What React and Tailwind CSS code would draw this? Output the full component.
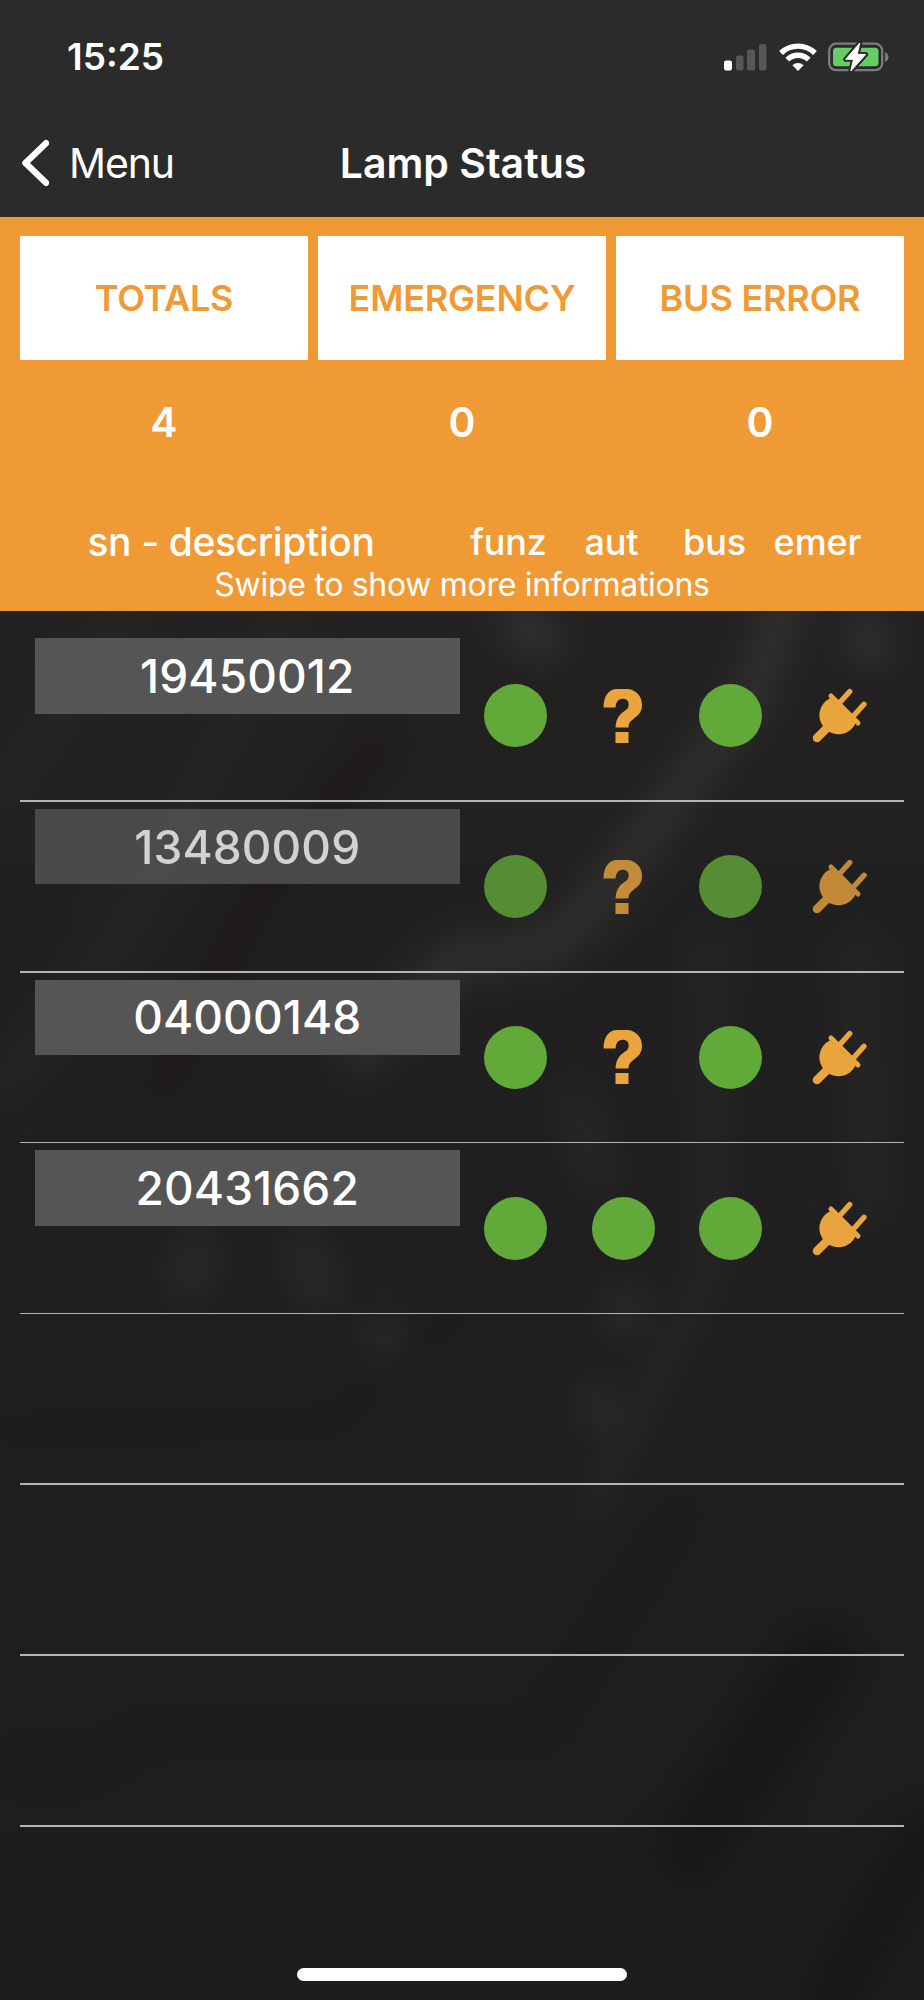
import React from 'react';

const summary = [
  { label: 'TOTALS', value: 4 },
  { label: 'EMERGENCY', value: 0 },
  { label: 'BUS ERROR', value: 0 },
];

const lamps = [
  { sn: '19450012', status: ['ok', 'unknown', 'ok', 'plug'] },
  { sn: '13480009', status: ['ok', 'unknown', 'ok', 'plug'], dimmed: true },
  { sn: '04000148', status: ['ok', 'unknown', 'ok', 'plug'] },
  { sn: '20431662', status: ['ok', 'ok', 'ok', 'plug'] },
  null,
  null,
  null,
];

const SignalIcon = () => (
  <svg width="43" height="28" viewBox="0 0 43 28">
    <rect x="0" y="17.5" width="8" height="10" rx="2" fill="#fff" />
    <rect x="12" y="12.5" width="7.5" height="15" rx="2" fill="#575757" />
    <rect x="23" y="6.5" width="8" height="21" rx="2" fill="#575757" />
    <rect x="35" y="1" width="7.5" height="26.5" rx="2" fill="#575757" />
  </svg>
);

const WifiIcon = () => (
  <svg width="38" height="28" viewBox="0 0 38 28">
    <g fill="none" stroke="#fff" strokeWidth="5.4">
      <path d="M2 10 A24.5 24.5 0 0 1 36 10" />
      <path d="M8.3 16.6 A15.3 15.3 0 0 1 29.7 16.6" />
    </g>
    <path d="M19 28 L13.4 22.3 A8 8 0 0 1 24.6 22.3 Z" fill="#fff" />
  </svg>
);

const BatteryIcon = () => (
  <svg width="62" height="30" viewBox="0 0 62 30">
    <rect x="1.2" y="1.7" width="53" height="26.5" rx="7" fill="none" stroke="#7d7d7d" strokeWidth="2.2" />
    <rect x="5" y="5.7" width="45.5" height="18.5" rx="3.5" fill="#65cf66" />
    <path d="M57 10 C61.7 12 61.7 18 57 20 Z" fill="#7d7d7d" />
    <path
      d="M31.8 1 L17.7 17.3 L25.5 17.3 L22.8 29 L37.7 12.4 L29.2 12.4 Z"
      fill="#fff"
      stroke="#2a2a2a"
      strokeWidth="5"
      strokeLinejoin="round"
    />
    <path
      d="M31.8 1 L17.7 17.3 L25.5 17.3 L22.8 29 L37.7 12.4 L29.2 12.4 Z"
      fill="#fff"
      stroke="#fff"
      strokeWidth="1"
      strokeLinejoin="round"
    />
  </svg>
);

const BackIcon = () => (
  <svg width="28" height="48" viewBox="0 0 28 48">
    <path d="M25 4.2 L4.4 24 L25 43.8" fill="none" stroke="#fff" strokeWidth="6.4" strokeLinecap="round" strokeLinejoin="round" />
  </svg>
);

const QuestionIcon = () => (
  <svg width="40" height="54" viewBox="0 0 40 54" fill="#eba53e">
    <path d="M0.5 18.5 C0.5 7 6 0 14 0 L25 0 C33 1 39 7 39 16 C39 22 36 26 31.5 29 C27.500 32.200 25.500 34 25.500 38.500 L12.500 38.500 C13 31.500 15 27 19.500 23.500 C23.500 20.500 25.700 19.500 25.700 15.500 C25.700 12 23.500 9.800 19.800 9.800 C15.500 9.800 13.200 12.500 12.500 18.500 Z" />
    <rect x="12.5" y="43" width="13" height="11" />
  </svg>
);

const PlugIcon = () => (
  <svg className="mb-px ml-[3px]" width="56" height="56" viewBox="0 0 56 56">
    <g stroke="#eba53e" strokeLinecap="round" fill="none">
      <path d="M5 51 L14 42" strokeWidth="8.5" />
      <path d="M27 16.5 L37.7 4.5" strokeWidth="5.4" />
      <path d="M41 29.5 L52 17.3" strokeWidth="5.4" />
      <path d="M19 9 L46 36" strokeWidth="5" />
    </g>
    <path d="M18 11.2 A19 19 0 1 0 43.5 36.5 Z" fill="#eba53e" />
  </svg>
);

const StatusIcon = ({ type }) => {
  if (type === 'unknown') return <QuestionIcon />;
  if (type === 'plug') return <PlugIcon />;
  return <div className="h-[63px] w-[63px] rounded-full bg-[#61a938]" />;
};

/* Out-of-focus circuit board behind the list */
const Backdrop = () => (
  <svg className="absolute inset-0 h-full w-full" viewBox="0 0 924 1389" preserveAspectRatio="none">
    <defs>
      <linearGradient id="base" x1="0" y1="0" x2="0" y2="1">
        <stop offset="0" stopColor="#232221" />
        <stop offset="0.5" stopColor="#201e1f" />
        <stop offset="1" stopColor="#1e1c1e" />
      </linearGradient>
      <filter
        id="soft"
        filterUnits="userSpaceOnUse"
        x="-100"
        y="-100"
        width="1124"
        height="1589"
        colorInterpolationFilters="sRGB"
      >
        <feGaussianBlur stdDeviation="17" />
      </filter>
    </defs>
    <g filter="url(#soft)" fill="none" strokeLinecap="round" strokeLinejoin="round">
      <rect x="-100" y="-100" width="1124" height="1589" fill="url(#base)" />
      <path d="M790 -20 L750 90 L580 310 L540 340 L460 345 L360 440" stroke="#302f2e" strokeWidth="38" />
      <path d="M130 0 L0 190" stroke="#272624" strokeWidth="30" />
      <path d="M290 0 L120 330 L0 480" stroke="#272624" strokeWidth="26" />
      <path d="M380 130 L250 300 L160 480" stroke="#1e1b1a" strokeWidth="40" />
      <path d="M710 330 L710 660 L590 900" stroke="#272625" strokeWidth="26" />
      <path d="M860 340 L870 600" stroke="#272625" strokeWidth="30" />
      <path d="M575 490 L600 570" stroke="#2a2728" strokeWidth="28" />
      <path d="M520 10 L540 30 M865 25 L870 35" stroke="#2f2f30" strokeWidth="46" />
      <path d="M195 640 L190 670 M305 640 L320 680 M385 720 L400 760 M625 690 L625 710 M595 790 L600 800" stroke="#2b2a2c" strokeWidth="38" />
      <path d="M0 820 L330 810 L460 700" stroke="#1c1a1b" strokeWidth="22" />
      <path d="M820 1050 L690 1240" stroke="#181617" strokeWidth="72" />
      <path d="M0 1150 L90 1150 L150 1120 L540 1120 L680 900" stroke="#1b191a" strokeWidth="24" />
      <path d="M924 1230 L830 1389" stroke="#181617" strokeWidth="60" />
    </g>
  </svg>
);

const LampRow = ({ lamp }) => (
  <div className="flex h-[170.8px] flex-col">
    <div className={`flex flex-1 pt-[7px] pl-[14.5px] ${lamp?.dimmed ? 'opacity-80' : ''}`}>
      {lamp && (
        <>
          <div className="flex h-[75.5px] w-[425.5px] items-center justify-center bg-[#555555] pt-px text-[46px] font-medium tracking-[0.1px] text-white">
            {lamp.sn}
          </div>
          <div className="ml-[2px] grid h-[155.5px] w-[430px] grid-cols-4">
            {lamp.status.map((type, index) => (
              <div key={index} className="flex items-center justify-center">
                <StatusIcon type={type} />
              </div>
            ))}
          </div>
        </>
      )}
    </div>
    <div className="h-[1.5px] bg-[#b5b5b5]" />
  </div>
);

export default function App() {
  return (
    <div className="flex h-[2000px] w-[924px] flex-col overflow-hidden bg-[#201e1f] font-['Inter',sans-serif] whitespace-nowrap text-white">
      <header className="h-[217px] shrink-0 bg-[#2b2b2b]">
        <div className="flex h-[113px] items-center justify-between pr-[34px] pl-[67px]">
          <span className="text-[37px] font-semibold">15:25</span>
          <div className="flex items-center">
            <SignalIcon />
            <div className="ml-[12px]">
              <WifiIcon />
            </div>
            <div className="ml-[11px]">
              <BatteryIcon />
            </div>
          </div>
        </div>
        <div className="grid h-[100px] grid-cols-3 items-center">
          <div className="flex items-center gap-[20px] pl-[21px]">
            <BackIcon />
            <span className="pt-px text-[41px] tracking-[-1.1px]">Menu</span>
          </div>
          <h1 className="pt-px pl-[2px] text-center text-[41px] font-semibold">Lamp Status</h1>
        </div>
      </header>

      <section className="h-[394px] shrink-0 bg-[#f09a36] pt-[19px]">
        <div className="grid grid-cols-3 gap-[10px] px-5">
          {summary.map((item) => (
            <div key={item.label}>
              <div className="flex h-[124px] items-center justify-center bg-white text-[36px] font-semibold tracking-[-0.2px] text-[#f09a36]">
                {item.label}
              </div>
              <div className="flex h-[124px] items-center justify-center pt-px text-[41px] font-semibold">{item.value}</div>
            </div>
          ))}
        </div>
        <div className="mt-[36px] flex h-[43px] items-center">
          <div className="w-[457px] pt-[2px] pl-[5px] text-center text-[39px] font-medium tracking-[-0.4px]">
            sn - description
          </div>
          <div className="grid w-[412px] grid-cols-4 text-center text-[36px] font-medium tracking-[-0.1px]">
            <span>funz</span>
            <span>aut</span>
            <span>bus</span>
            <span>emer</span>
          </div>
        </div>
        <p className="h-[33.5px] overflow-hidden text-center text-[32px] leading-[43px] tracking-[-0.3px]">
          Swipe to show more informations
        </p>
      </section>

      <main className="relative flex-1">
        <Backdrop />
        <div className="relative flex h-full flex-col px-5 pt-[20px]">
          {lamps.map((lamp, index) => (
            <LampRow key={index} lamp={lamp} />
          ))}
          <div className="mt-[141px] h-[13px] w-[330px] self-center rounded-full bg-white" />
        </div>
      </main>
    </div>
  );
}
